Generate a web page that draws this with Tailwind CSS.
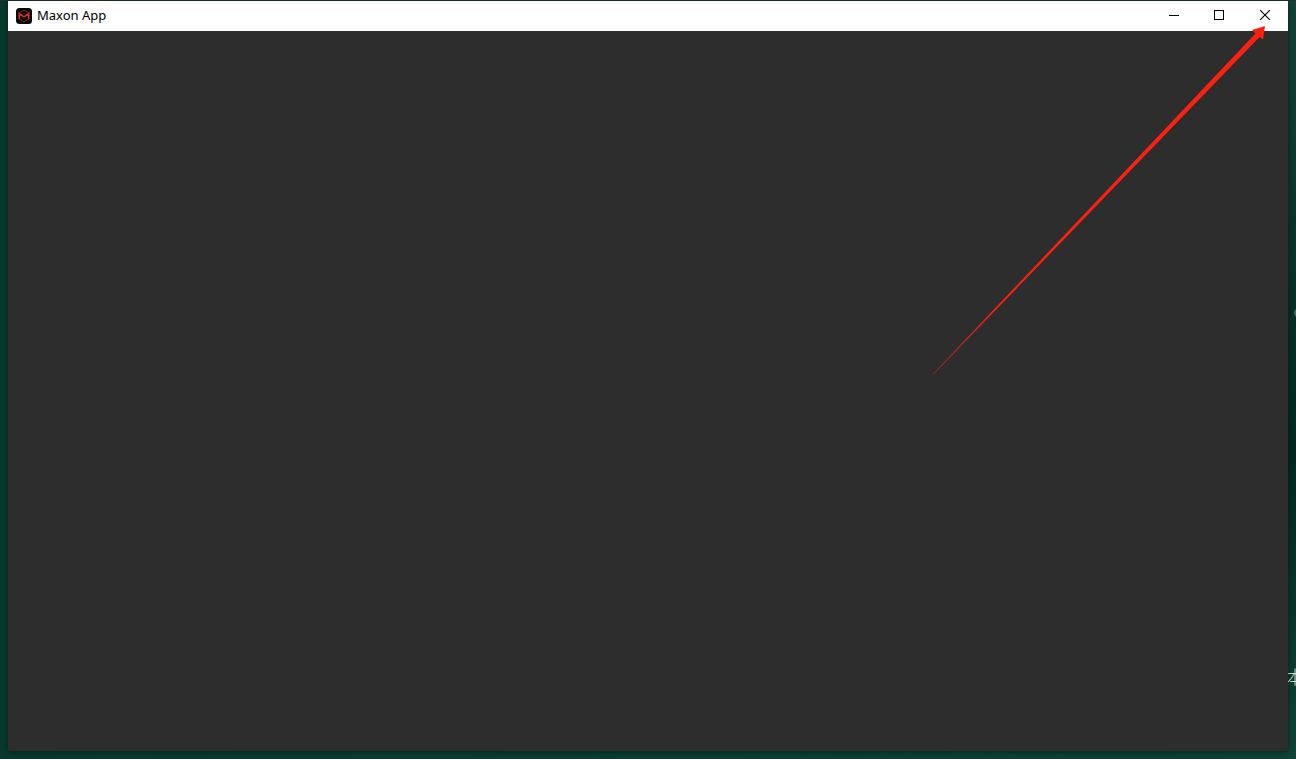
<!DOCTYPE html>
<html lang="en">
<head>
<meta charset="utf-8">
<title>Maxon App</title>
<script src="https://cdn.jsdelivr.net/npm/@tailwindcss/browser@4"></script>
</head>
<body class="relative flex h-screen flex-col overflow-hidden bg-linear-to-r from-[#09392d] to-[#0f4234] px-2 pt-px pb-2">
  <!-- desktop items partly hidden by the window -->
  <div class="absolute inset-y-0 right-0 w-2 bg-linear-to-b from-[#124335] via-[#03291e] via-60% to-[#0f4536]"></div>
  <div class="absolute top-[309px] -right-[6px] size-2 rounded-full bg-[#3d6b5d]"></div>
  <span class="absolute top-[664px] -right-2 text-[18px] leading-6 font-light text-[#d5ded9] font-['Noto_Sans_CJK_SC',sans-serif]" lang="zh">本</span>
  <div class="absolute inset-x-0 top-0 h-px bg-[#20332d]"></div>

  <main class="relative flex flex-1 flex-col bg-[#2d2d2d] shadow-[0_1px_6px_rgba(0,0,0,0.45)]">
    <header class="flex h-[30px] items-center bg-white text-black">
      <svg class="ml-2 size-4" viewBox="0 0 16 16" fill="none" aria-hidden="true">
        <rect width="16" height="16" rx="3.5" fill="#080606"/>
        <path d="M3 5 8 2.200l5 2.800M3 11l5 2.800L13 11" stroke="#7d2118" stroke-width="1"/>
        <path d="M3.300 11V5.800L8 8.800l4.700-3V11" stroke="#d92e1e" stroke-width="1.600"/>
      </svg>
      <h1 class="ml-[5px] flex-1 pb-0.5 text-[13px] leading-4 font-['Noto_Sans',sans-serif]">Maxon App</h1>
      <button type="button" aria-label="Minimize" class="flex h-full w-[45px] items-center justify-center pb-0.5">
        <svg class="h-[10px] w-[10px]" viewBox="0 0 10 10" shape-rendering="crispEdges"><path d="M0 5h10v1H0z"/></svg>
      </button>
      <button type="button" aria-label="Maximize" class="flex h-full w-[46px] items-center justify-center pb-0.5">
        <svg class="h-[10px] w-[10px]" viewBox="0 0 10 10" fill="none" stroke="#000" shape-rendering="crispEdges"><path d="M.5.5h9v9h-9z"/></svg>
      </button>
      <button type="button" aria-label="Close" class="flex h-full w-[46px] items-center justify-center pb-0.5">
        <svg class="h-[10px] w-[10px]" viewBox="0 0 10 10" stroke="#000" stroke-width="1.100"><path d="m0 0 10 10M10 0 0 10"/></svg>
      </button>
    </header>
  </main>

  <!-- annotation arrow pointing at the close button -->
  <svg class="pointer-events-none absolute top-6 right-[30px] h-[352px] w-[336px]" viewBox="0 0 336 352" aria-hidden="true">
    <defs>
      <linearGradient id="fade" gradientUnits="userSpaceOnUse" x1="2" y1="351" x2="70" y2="280">
        <stop offset="0" stop-color="#fb2010" stop-opacity="0.5"/>
        <stop offset="1" stop-color="#fb2010"/>
      </linearGradient>
    </defs>
    <path d="M3 349.700 325.500 9.500 322 6 335 2 333 15.500 329.500 13 3.600 350.300z" fill="url(#fade)"/>
  </svg>
</body>
</html>
